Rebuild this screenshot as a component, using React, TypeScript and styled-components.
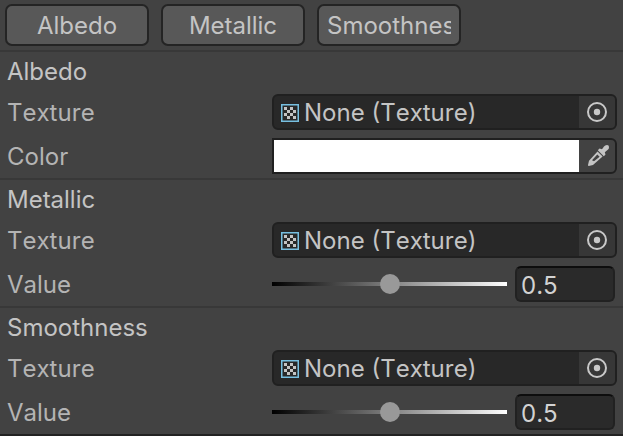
import React, { useState } from 'react';
import styled, { createGlobalStyle } from 'styled-components';

const GlobalStyle = createGlobalStyle`
  *, *::before, *::after { box-sizing: border-box; }
  body {
    margin: 0;
    background: #424242;
    color: #c4c4c4;
    font-family: Inter, "Liberation Sans", sans-serif;
    font-size: 24px;
    line-height: 32px;
    font-kerning: none;
  }
  button, input { font: inherit; font-kerning: none; color: inherit; margin: 0; }
`;

const Inspector = styled.main`
  border-bottom: 2px solid #222222;
`;

const Toolbar = styled.nav`
  display: flex;
  gap: 12px;
  padding: 4px 5px;
`;

const ToolbarButton = styled.button`
  flex: 0 1 144px;
  min-width: 0;
  height: 42px;
  padding: 2px 8px 0;
  border: 2px solid #242424;
  border-radius: 7px;
  background: #585858;
`;

const ToolbarLabel = styled.span`
  display: block;
  overflow: hidden;
  white-space: nowrap;
  text-align: center;
`;

const Section = styled.section`
  display: flex;
  flex-direction: column;
  gap: 8px;
  padding: 0 6px 4px 7px;
  border-top: 2px solid #383838;
`;

const Heading = styled.h2`
  margin: 0 0 -6px;
  font-size: 24px;
  font-weight: 400;
  line-height: 40px;
`;

const Row = styled.div`
  display: grid;
  grid-template-columns: 265px minmax(0, 1fr);
  align-items: center;
  height: 36px;
`;

const Label = styled.label`
  padding-top: 2px;
  color: #b4b4b4;
`;

const Field = styled.div<{ $square?: boolean }>`
  display: flex;
  height: 36px;
  overflow: hidden;
  border: 2px solid #202020;
  border-radius: ${(p) => (p.$square ? '0 6px 6px 0' : '6px')};
  background: #282828;
`;

const ObjectName = styled.div`
  display: flex;
  flex: 1;
  align-items: center;
  gap: 5px;
  min-width: 0;
  padding: 2px 0 0 7px;
  white-space: nowrap;
`;

const FieldButton = styled.button<{ $plain?: boolean }>`
  display: flex;
  flex: 0 0 36px;
  align-items: center;
  justify-content: center;
  padding: ${(p) => (p.$plain ? '0 0 0 4px' : '0')};
  border: 0;
  background: ${(p) => (p.$plain ? '#424242' : '#373737')};
`;

const Swatch = styled.input`
  flex: 1;
  min-width: 0;
  height: 32px;
  padding: 0;
  border: 0;
  background: none;
  appearance: none;
  &::-webkit-color-swatch-wrapper { padding: 0; }
  &::-webkit-color-swatch { border: 0; border-radius: 0; }
`;

const SliderGroup = styled.div`
  display: flex;
  align-items: center;
  gap: 8px;
  padding-right: 2px;
`;

const Slider = styled.input`
  flex: 1;
  min-width: 0;
  height: 20px;
  appearance: none;
  background: linear-gradient(90deg, #000000, #ffffff) center / 100% 4px no-repeat;
  &::-webkit-slider-thumb {
    appearance: none;
    width: 20px;
    height: 20px;
    border-radius: 50%;
    background: #999999;
  }
`;

const NumberBox = styled.input`
  width: 100px;
  height: 36px;
  padding: 2px 4px 0;
  border: 2px solid #212121;
  border-top-color: #0d0d0d;
  border-radius: 6px;
  background: #2a2a2a;
  color: #d2d2d2;
`;

const checks = [
  [0, 0], [2, 0], [1, 1], [3, 1], [0, 2], [2, 2], [1, 3], [3, 3],
];

const TextureIcon = () => (
  <svg width="18" height="18" viewBox="0 0 18 18" aria-hidden="true">
    <rect x="0.75" y="0.75" width="16.5" height="16.5" fill="#282828" stroke="#77bfe0" strokeWidth="1.5" />
    {checks.map(([x, y]) => (
      <rect key={`${x}${y}`} x={3 + x * 3} y={3 + y * 3} width="3" height="3" fill="#c4c4c4" />
    ))}
  </svg>
);

const TargetIcon = () => (
  <svg width="22" height="22" viewBox="0 0 22 22" aria-hidden="true">
    <circle cx="11" cy="11" r="9" fill="none" stroke="#c8c8c8" strokeWidth="2" />
    <circle cx="11" cy="11" r="3.2" fill="#c8c8c8" />
  </svg>
);

const DropperIcon = () => (
  <svg width="22" height="22" viewBox="0 0 22 22" aria-hidden="true">
    <path
      fill="#c4c4c4"
      d="M16 1.5 Q17 0 19 0 Q21 0 21 2 Q21.3 4 19.5 5 L16.8 7.2 L17.5 9.5 L15.8 11.3 L9.8 5.3 L11.5 3.6 L14 4.3 Z"
    />
    <path
      fill="#c4c4c4"
      fillRule="evenodd"
      d="M9.5 6.5 L14.6 11.6 L5 20 L0.8 21 Q0 21 0 20 L1 15.8 Z M9.3 9.6 L4 15.2 L6 16.2 L11.6 11.8 Z"
    />
  </svg>
);

const TextureRow = ({ id }: { id: string }) => (
  <Row>
    <Label as="span" id={`${id}-texture`}>Texture</Label>
    <Field role="group" aria-labelledby={`${id}-texture`}>
      <ObjectName><TextureIcon />None (Texture)</ObjectName>
      <FieldButton type="button" aria-label="Select texture"><TargetIcon /></FieldButton>
    </Field>
  </Row>
);

const ColorRow = ({ id }: { id: string }) => {
  const [color, setColor] = useState('#ffffff');
  return (
    <Row>
      <Label htmlFor={`${id}-color`}>Color</Label>
      <Field $square>
        <Swatch id={`${id}-color`} type="color" value={color} onChange={(e) => setColor(e.target.value)} />
        <FieldButton $plain type="button" aria-label="Pick color"><DropperIcon /></FieldButton>
      </Field>
    </Row>
  );
};

const ValueRow = ({ id }: { id: string }) => {
  const [value, setValue] = useState('0.5');
  return (
    <Row>
      <Label htmlFor={`${id}-value`}>Value</Label>
      <SliderGroup>
        <Slider
          type="range" min="0" max="1" step="0.01" aria-label="Value slider"
          value={value} onChange={(e) => setValue(e.target.value)}
        />
        <NumberBox
          id={`${id}-value`} type="text" inputMode="decimal"
          value={value} onChange={(e) => setValue(e.target.value)}
        />
      </SliderGroup>
    </Row>
  );
};

const sections = ['Albedo', 'Metallic', 'Smoothness'];

export default function App() {
  return (
    <>
      <GlobalStyle />
      <Inspector>
        <Toolbar>
          {sections.map((name) => (
            <ToolbarButton key={name} type="button"><ToolbarLabel>{name}</ToolbarLabel></ToolbarButton>
          ))}
        </Toolbar>
        {sections.map((name) => (
          <Section key={name}>
            <Heading>{name}</Heading>
            <TextureRow id={name} />
            {name === 'Albedo' ? <ColorRow id={name} /> : <ValueRow id={name} />}
          </Section>
        ))}
      </Inspector>
    </>
  );
}
